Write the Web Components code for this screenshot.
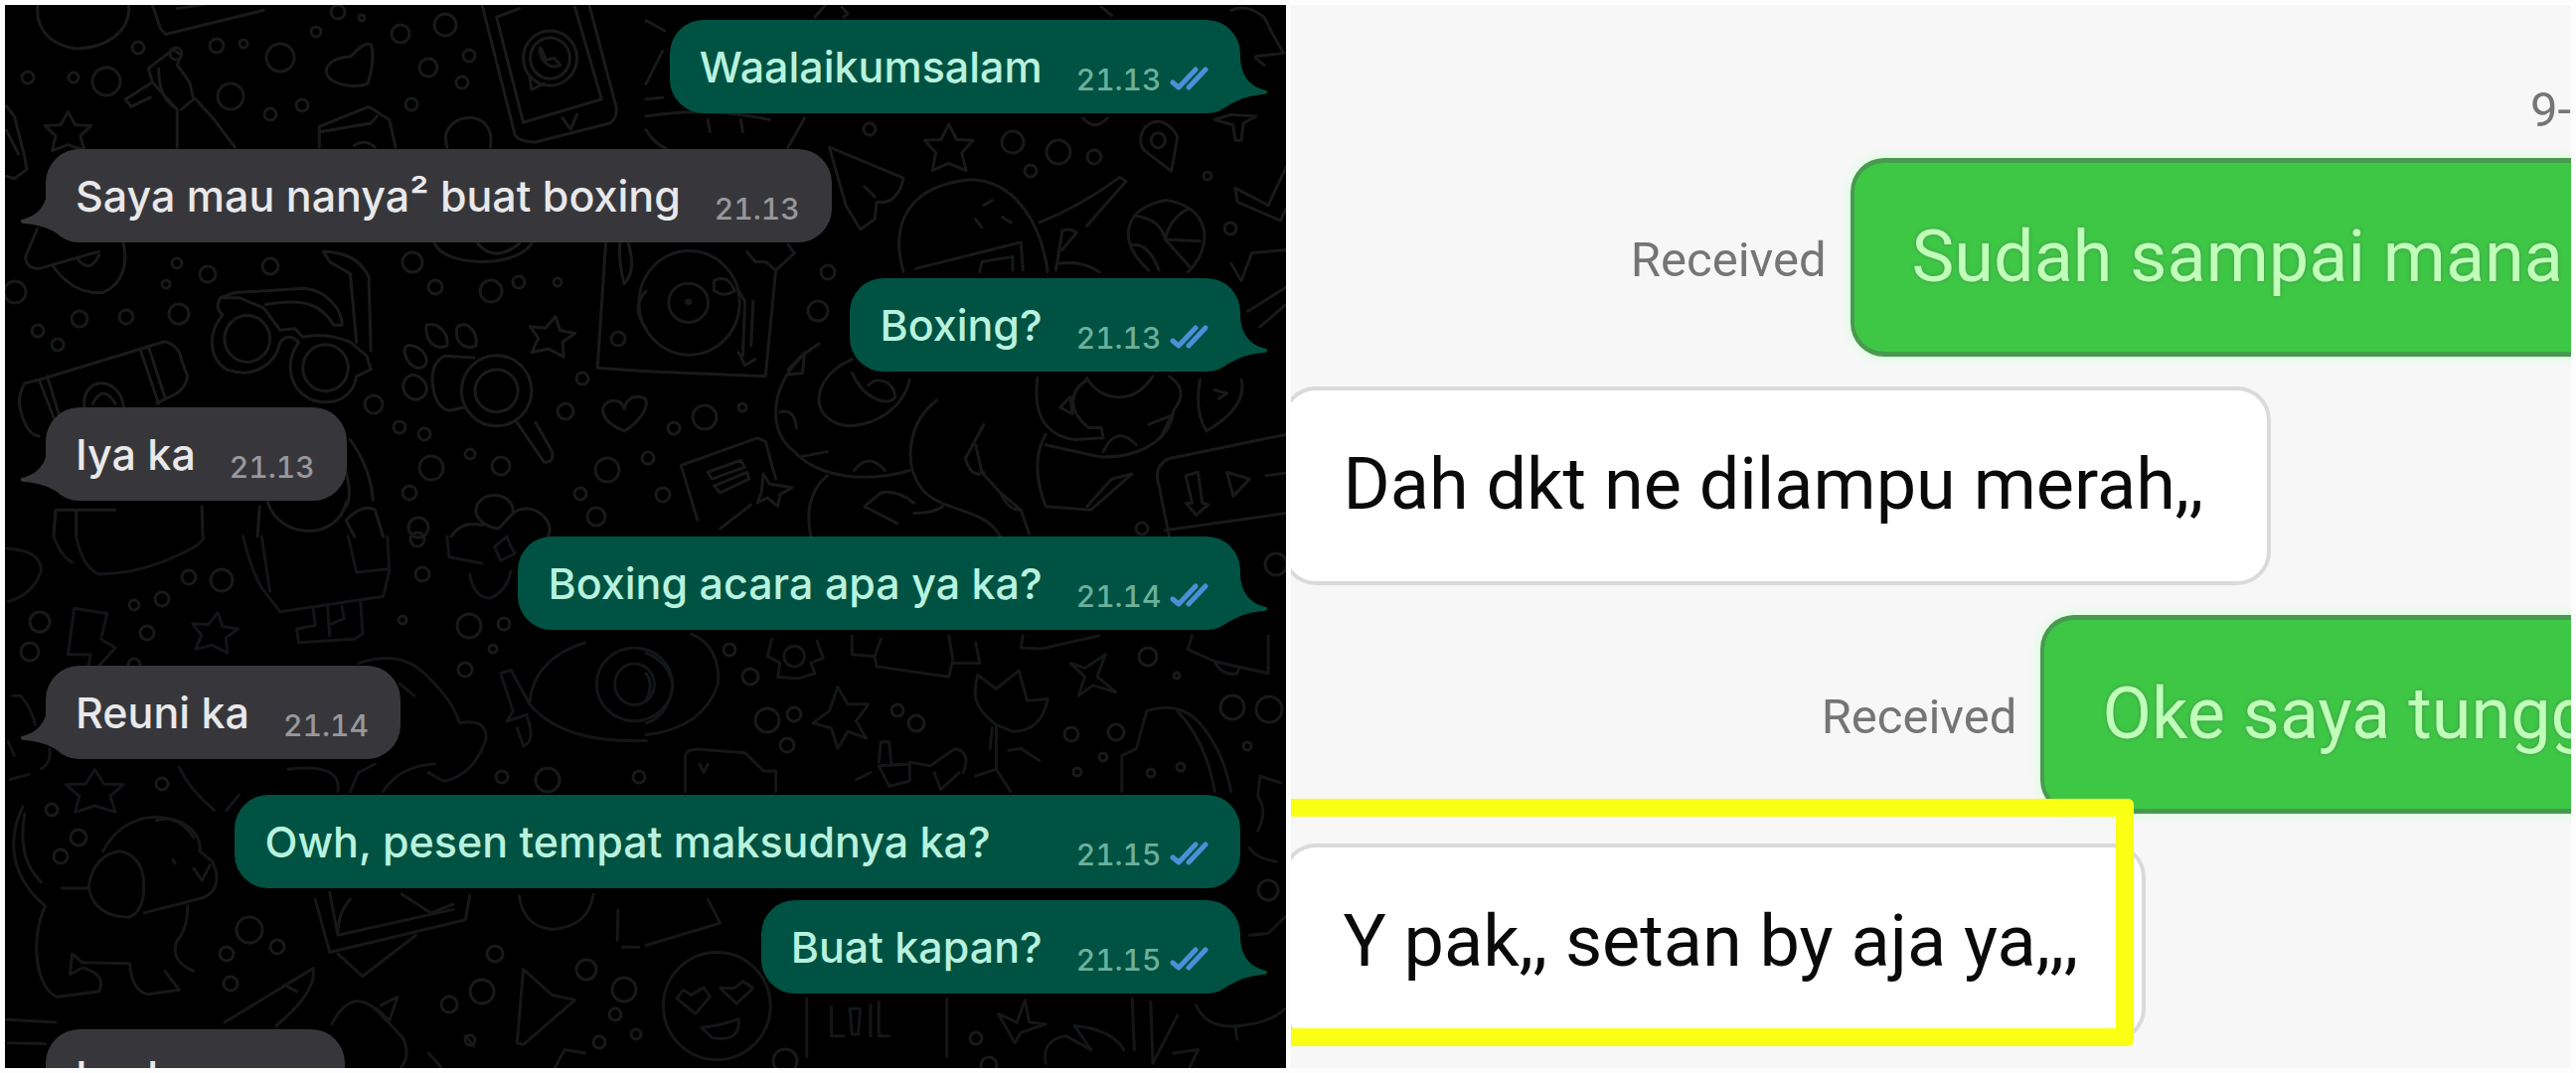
<!DOCTYPE html>
<html lang="id">
<head>
<meta charset="utf-8">
<title>Chat</title>
<style>
  html, body { margin: 0; height: 100%; background: #fdfdfe; }
</style>
</head>
<body>
<chat-collage>
  <dark-chat slot="left">
    <dark-bubble side="out" tail time="21.13">Waalaikumsalam</dark-bubble>
    <dark-bubble side="in" tail time="21.13">Saya mau nanya² buat boxing</dark-bubble>
    <dark-bubble side="out" tail time="21.13">Boxing?</dark-bubble>
    <dark-bubble side="in" tail time="21.13">Iya ka</dark-bubble>
    <dark-bubble side="out" tail time="21.14">Boxing acara apa ya ka?</dark-bubble>
    <dark-bubble side="in" tail time="21.14">Reuni ka</dark-bubble>
    <dark-bubble side="out" loose time="21.15">Owh, pesen tempat maksudnya ka?</dark-bubble>
    <dark-bubble side="out" tail follow time="21.15">Buat kapan?</dark-bubble>
    <dark-bubble side="in" tail time="">Iya ka</dark-bubble>
  </dark-chat>
  <light-chat slot="right" date="9-">
    <light-bubble side="out" status="Received">Sudah sampai mana</light-bubble>
    <light-bubble side="in">Dah dkt ne dilampu merah,,</light-bubble>
    <light-bubble side="out" long status="Received">Oke saya tungg</light-bubble>
    <light-bubble side="in" marked>Y pak,, setan by aja ya,,,</light-bubble>
  </light-chat>
</chat-collage>

<template id="collage-tpl">
  <style>
    :host { display: grid; grid-template-columns: 1fr 1fr; gap: 5px; height: 100vh; padding: 5px; box-sizing: border-box; }
    ::slotted(*) { min-width: 0; min-height: 0; }
  </style>
  <slot name="left"></slot>
  <slot name="right"></slot>
</template>

<template id="dark-chat-tpl">
  <style>
    :host { display: block; position: relative; overflow: hidden; background: #000; font-family: Inter, "Liberation Sans", sans-serif; }
    .list { position: relative; display: flex; flex-direction: column; gap: 36px; padding: 15px 46px 0 41px; }
    doodle-wallpaper { position: absolute; inset: 0; }
  </style>
  <doodle-wallpaper></doodle-wallpaper>
  <div class="list"><slot></slot></div>
</template>

<template id="dark-bubble-tpl">
  <style>
    :host { display: flex; flex: none; }
    :host([side="out"]) { justify-content: flex-end; --fill: #005242; --ink: #b8f2de; --dim: #6cb09b; }
    :host([side="in"]) { --fill: #37373b; --ink: #e8e8ea; --dim: #98989c; }
    :host([follow]) { margin-top: -24px; }
    .bubble { position: relative; display: flex; align-items: flex-end; gap: 34px; height: 94px; padding: 0 32px 0 30px; box-sizing: border-box; border-radius: 34px; background: var(--fill); color: var(--ink); }
    :host([loose]) .bubble { gap: 86px; }
    .text { font-size: 43px; font-weight: 500; line-height: 94px; white-space: nowrap; }
    .meta { display: flex; align-items: flex-end; gap: 8px; padding-bottom: 19px; color: var(--dim); }
    time { font-size: 30px; font-weight: 500; line-height: 30px; font-variant-numeric: tabular-nums; }
    .ticks { display: none; width: 39px; height: 24px; margin-bottom: 4px; }
    :host([side="out"]) .ticks { display: block; }
    .tail { display: none; position: absolute; top: 36px; width: 56px; height: 54px; fill: var(--fill); }
    :host([tail]) .tail { display: block; }
    :host([side="out"]) .tail { right: -28px; }
    :host([side="in"]) .tail { left: -26px; transform: scaleX(-1); }
  </style>
  <div class="bubble">
    <svg class="tail" viewBox="0 0 56 54" aria-hidden="true"><path d="M10 0H28C28 18 36 31 54 35C57 37 54 39 50 39C40 40 32 42 24 46L8 54Z"/></svg>
    <span class="text"><slot></slot></span>
    <span class="meta">
      <time></time>
      <svg class="ticks" viewBox="0 0 39 24" fill="none" stroke="#4a90d8" stroke-width="5" stroke-linecap="round" stroke-linejoin="round" role="img" aria-label="Dibaca"><path d="M3 16L9 21L26 3M19 21L36 3"/></svg>
    </span>
  </div>
</template>

<template id="light-chat-tpl">
  <style>
    :host { display: block; overflow: hidden; background: #f7f7f7; font-family: Roboto, "Liberation Sans", sans-serif; }
    .date { padding-top: 76px; margin-bottom: 18px; text-align: right; color: #757575; font-size: 49px; line-height: 60px; }
    .list { display: flex; flex-direction: column; gap: 30px; }
  </style>
  <div class="date"></div>
  <div class="list"><slot></slot></div>
</template>

<template id="light-bubble-tpl">
  <style>
    :host { display: flex; flex: none; align-items: center; gap: 24px; }
    :host([side="out"]) { justify-content: flex-end; }
    .status { padding-top: 6px; color: #757575; font-size: 49px; line-height: 60px; }
    .bubble { position: relative; height: 200px; box-sizing: border-box; font-size: 72px; line-height: 190px; white-space: nowrap; }
    :host([side="out"]) .bubble { padding: 0 8px 0 58px; border: 5px solid #489a4f; border-width: 5px 0 5px 4px; border-radius: 34px 0 0 34px; background: #3ec745; color: #bfffb8; text-shadow: 0 0 4px #4a8f55; box-shadow: 0 0 8px 3px #dcffe0; }
    :host([long]) .bubble { padding-right: 0; margin-right: -20px; }
    :host([side="in"]) .bubble { margin-left: -9px; padding: 0 64px 0 58px; border: 4px solid #dadadd; border-radius: 34px; background: #fff; color: #0a0a0a; }
    .mark { display: none; position: absolute; inset: -49px 8px -8px 5px; border: 18px solid #faff14; border-left: 0; border-radius: 0 6px 6px 0; }
    :host([marked]) .mark { display: block; }
  </style>
  <span class="status"></span>
  <div class="bubble"><slot></slot><span class="mark"></span></div>
</template>

<template id="wallpaper-tpl">
  <style>
    :host { display: block; }
    svg { display: block; width: 100%; height: 100%; }
    g { fill: none; stroke-width: 3; stroke-linecap: round; stroke-linejoin: round; }
    g * { vector-effect: non-scaling-stroke; }
  </style>
  <svg viewBox="5 5 1289 1070" preserveAspectRatio="xMinYMin slice" aria-hidden="true">
    <defs>
      <path id="star" vector-effect="non-scaling-stroke" d="M0-58L18-20L56-18L30 12L40 55L0 38L-38 55L-30 12L-56-18L-18-20Z"/>
      <path id="heart" vector-effect="non-scaling-stroke" d="M0 50C-60 20-60-20-40-35C-20-45-5-35 0-15C5-45 25-60 50-45C65-20 30 30 0 50Z"/>
    </defs>
    <g id="q1" transform="scale(.4146 .3444)" stroke="#191b1a">
      <path d="M92 10C85 70 110 130 185 142C260 140 320 90 312 10M370 15L390 85L402 100L640 30M430 25L500 12"/>
      <path d="M430 430L430 320L370 240L305 290L318 312L365 285M370 240L360 200L420 145L440 160L430 190L460 240L470 290L440 320M385 200C385 260 400 300 430 318M475 290L520 350L570 430"/>
      <use href="#star" transform="translate(165 385)"/>
      <path d="M15 310L35 340L60 460L65 495L35 522L15 515M15 380L45 450"/>
      <path d="M900 130C880 120 860 160 850 165C800 170 780 200 800 230C830 255 870 255 892 245C900 220 910 160 900 130Z"/>
      <path d="M775 430L775 370L895 312L945 350L960 430M780 385L900 360L915 340M860 425Q885 405 910 430M1085 430C1070 370 1110 340 1150 345C1190 355 1195 400 1190 430"/>
      <path d="M1170 15L1250 395Q1260 415 1300 415L1480 360Q1500 345 1495 310L1430 15M1205 50L1270 358L1460 290L1395 20M1205 50L1260 25M1365 345L1385 378L1400 335"/>
      <ellipse cx="1335" cy="170" rx="65" ry="80"/><ellipse cx="1335" cy="170" rx="48" ry="60"/><path d="M1310 140C1310 180 1335 205 1360 190L1345 170L1325 175L1315 145Z M1285 220L1290 262L1320 245"/>
      <path d="M90 670L62 750Q62 785 95 785L240 735M130 780C160 830 200 860 250 855C300 830 310 770 300 712M190 760Q220 800 240 745"/>
      <path d="M785 735L800 765L850 800L865 1000M790 735Q870 740 895 810L900 1025"/>
      <path d="M535 870Q520 900 540 920C500 980 510 1050 550 1080C620 1110 670 1060 680 1000Q700 970 725 1000C690 1060 700 1140 760 1170C820 1190 860 1150 865 1100L900 1080L890 1040L850 1000Q790 970 735 985L715 960L680 965L640 900L580 870L535 870L570 855L740 843C790 850 830 900 830 950L810 950C780 890 740 870 645 890"/>
      <ellipse cx="600" cy="990" rx="55" ry="68"/><ellipse cx="790" cy="1075" rx="55" ry="68"/>
      <path d="M135 1235L95 1110L60 1120Q40 1160 50 1200Q65 1270 95 1275M95 1110L400 998Q435 1010 440 1050L455 1100Q450 1140 420 1155L380 1178M340 1020L385 1180M115 1100L145 1220M360 1012L400 1160M205 1190C195 1100 290 1095 300 1188M225 1180Q250 1120 280 1180"/>
      <path d="M1150 1045L1080 1040Q1045 1060 1050 1120Q1055 1190 1090 1200L1130 1190"/>
      <ellipse cx="1205" cy="1142" rx="85" ry="103"/><ellipse cx="1205" cy="1142" rx="52" ry="62"/>
      <path d="M1255 1235L1320 1350Q1345 1355 1340 1320L1300 1235M1000 1010C970 1000 980 1060 1010 1075C1050 1080 1040 1020 1000 1010ZM1000 1095C965 1110 975 1165 1010 1168C1050 1160 1040 1100 1000 1095ZM1035 950C1030 1000 1060 1025 1085 1010C1090 970 1060 940 1035 950ZM1110 955C1100 1000 1130 1025 1155 1010C1160 970 1135 935 1110 955Z"/>
      <use href="#star" transform="translate(1338 982) rotate(10)"/>
      <use href="#heart" transform="translate(1515 1210)"/>
      <path d="M1055 712C1080 780 1250 785 1290 712M1160 712Q1200 770 1260 712M1470 712L1450 1075L1568 1085M1505 712Q1500 760 1515 830Q1545 790 1525 712M1568 850Q1530 900 1568 960"/>
      <path d="M130 1568L135 1490L280 1490M185 1490L185 1568M490 1480L492 1568M650 1468C680 1580 820 1580 840 1468M850 1285Q900 1370 905 1460M840 1380Q855 1450 840 1480M840 1520Q880 1470 910 1490L930 1568M840 1520L860 1568M630 1480L625 1568"/>
      <path d="M1155 1500C1150 1430 1250 1430 1245 1500C1290 1460 1350 1520 1330 1568M1155 1500Q1170 1540 1210 1545L1245 1500M1095 1568Q1120 1520 1170 1535"/>
    </g>
    <g id="q2" transform="translate(650 0) scale(.4146 .3444)" stroke="#18191a">
      <path d="M0 60L45 90M40 150L0 245M475 20L490 40L480 50M410 50L435 15M1105 20L1130 45M1420 30Q1460 10 1500 50Q1520 100 1545 150M1480 170L1500 190M1480 165L1550 155"/>
      <path d="M0 290L40 285M0 340Q150 310 300 350M0 380Q20 420 50 435M150 350L155 385M230 350L235 385M385 345L345 430"/>
      <use href="#star" transform="translate(735 432) scale(1.05 1.2)"/>
      <path d="M445 430L625 520Q610 600 560 590L555 640L520 670L485 600ZM530 545L555 575M1250 355C1200 350 1190 420 1210 440L1275 500L1290 400Q1280 370 1250 355Z"/>
      <ellipse cx="1243" cy="410" rx="17" ry="22"/><path d="M1380 350L1420 335L1480 340L1450 360L1445 410L1430 410L1425 365ZM1060 345Q1090 385 1120 345"/>
      <path d="M625 795C590 650 640 540 790 525C900 530 960 660 975 795M655 785L910 708L915 790M810 795L815 765L890 750L890 790M800 640L815 665M865 635L885 650M820 600L840 585"/>
      <path d="M955 650C1020 620 1080 580 1150 518L1165 530L1070 660M995 790L1010 675Q1030 665 1045 680L1010 730M1000 770Q1060 760 1100 795"/>
      <path d="M1220 790C1140 700 1160 610 1260 585C1370 600 1380 720 1315 795M1185 630Q1250 640 1260 700L1345 705M1260 700Q1270 640 1315 610M1260 700L1320 780M1180 715Q1220 710 1245 790"/>
      <path d="M1553 490L1510 600L1430 550L1435 590L1540 645L1553 610M1420 770L1445 820L1470 740L1553 730M1460 910L1553 840M1490 955L1553 890"/>
      <ellipse cx="105" cy="885" rx="122" ry="152"/><ellipse cx="103" cy="885" rx="48" ry="57"/><circle cx="103" cy="882" r="5"/>
      <path d="M245 735L265 765L290 765L315 790L290 1100L0 1085M315 790L360 740L345 715M225 850L240 880L235 1040M260 880L255 1010M225 1030L240 1068L265 1050M165 820Q200 800 215 850Q190 870 165 850Z"/>
      <path d="M420 1005C310 1080 280 1250 360 1320C420 1400 540 1410 640 1375M500 1050C400 1100 390 1230 490 1245C580 1240 630 1170 640 1110M500 1090C530 1170 590 1190 605 1160C600 1110 560 1100 540 1125M345 1080L385 1030L380 1090L345 1095M325 1205Q360 1190 365 1250M375 1335L440 1320M505 1375Q540 1320 580 1375M440 1390Q380 1450 400 1568"/>
      <path d="M705 1170C640 1230 620 1350 670 1430C720 1500 820 1480 860 1568M820 1240L775 1340Q790 1400 820 1380M800 1300L815 1380L860 1440L910 1490L930 1560M530 1480L570 1440Q610 1430 650 1470M530 1480L610 1530M650 1500Q700 1500 720 1480M860 1440Q880 1490 905 1490"/>
      <path d="M950 1105C940 1200 960 1270 1040 1285L1110 1280L1105 1250L1075 1250C1030 1210 1020 1150 1070 1110M1070 1105C1100 1170 1180 1190 1230 1100M1270 1100Q1320 1140 1280 1200C1270 1300 1180 1340 1100 1335L970 1300M1110 1320Q1140 1240 1190 1300M1220 1240L1275 1215L1250 1275M1005 1190L1030 1160L1035 1210ZM970 1270Q930 1350 970 1480L1080 1490L1180 1385L1130 1400L1070 1480"/>
      <path d="M1345 1110Q1330 1200 1360 1260Q1460 1190 1445 1110M1380 1140L1410 1150L1390 1165M1553 1270L1270 1340Q1230 1360 1245 1420L1270 1568M1310 1390L1340 1380L1350 1470L1365 1475L1335 1505L1310 1470L1325 1470ZM1410 1380L1465 1400L1425 1450ZM1505 1390L1553 1382M1260 1550L1553 1500"/>
      <path d="M125 1520L85 1360L270 1280L290 1290L315 1400M150 1380L230 1345L240 1365L160 1400ZM165 1420L245 1380L250 1400L180 1440ZM285 1385L300 1415L355 1425L325 1445L320 1480L295 1455L270 1470L280 1440ZM180 1545L255 1475"/>
    </g>
    <g id="q3" transform="translate(0 540) scale(.4146 .3444)" stroke="#141519">
      <path d="M15 35Q100 40 100 100Q80 170 20 190M130 0Q150 60 175 75M185 0Q200 90 240 110Q350 110 465 35Q490 20 495 0M590 0Q610 100 635 150L680 220L930 175L945 100L940 0M635 0L655 160M845 0L865 105L940 95M1085 0L1090 60L1170 78M1200 30L1230 0L1240 30L1250 50L1215 70ZM1140 110Q1150 180 1190 180Q1230 160 1240 100"/>
      <path d="M760 210L765 260L720 270L725 310L860 300L880 285L875 190M795 205L800 290M830 205L835 240L805 255"/>
      <path d="M180 210L260 225L245 300L280 325L240 378M180 210L165 345L220 345L215 378"/><use href="#star" transform="translate(520 280) rotate(8)"/>
      <path d="M870 370Q970 330 1030 400Q1100 480 1115 545Q1180 530 1180 590Q1150 700 1075 715L1040 690M970 430L1005 465M930 745Q970 670 1055 665M850 745L870 690L910 665M700 680Q830 660 820 745M435 675Q460 740 520 800M550 800L580 755"/>
      <path d="M1420 310C1340 340 1290 400 1285 490C1350 580 1450 600 1568 597M1285 490L1240 390L1215 400L1245 510L1230 540L1280 520M1280 530Q1300 600 1270 612L1255 560"/><ellipse cx="1540" cy="432" rx="92" ry="107"/><ellipse cx="1540" cy="432" rx="48" ry="60"/>
      <path d="M30 465L50 465Q80 510 85 550M20 600L35 640M120 620Q125 665 100 678M25 710L70 695"/><use href="#star" transform="translate(230 745) scale(1.25 1.1)"/>
    </g>
    <g id="q3b" transform="translate(0 540) scale(.4146 .3444)" stroke="#151814">
      <path d="M55 790C20 880 20 990 110 1080C70 1180 90 1330 140 1345L240 1330Q260 1280 200 1260L170 1280L175 1220L200 1245L315 1248Q320 1330 360 1338L435 1325L400 1270M60 810Q40 940 100 1010M150 1028L215 1028M215 1020C220 1080 260 1115 315 1112Q355 1090 348 1000Q340 930 290 920Q230 930 215 1020M250 920C290 830 360 800 440 835Q490 870 485 920L515 950C540 1010 520 1050 480 1060L350 1100M455 1080Q455 1150 430 1180Q410 1240 470 1270M380 830Q430 810 470 880M420 945L425 955M470 970L490 1005L510 960"/>
      <path d="M765 1060L800 1215L1130 1120L1140 1050M800 1040L820 1165L1100 1090M850 1060Q820 1100 820 1160M975 1045L1045 1100L1100 1075M820 1220L880 1285L1010 1165M545 1420L760 1262Q770 1330 670 1430M690 1310L720 1330M1260 1050Q1270 1140 1340 1148Q1430 1140 1440 1045M1500 1090L1498 1180M1510 1200L1550 1200"/>
      <path d="M805 1425Q850 1320 910 1380Q960 1440 980 1470Q1000 1530 960 1568M915 1380L945 1415L965 1345L925 1370M1270 1265L1255 1480L1270 1485L1395 1355L1340 1340ZM15 1412L135 1420M20 1480L110 1482M1130 1460L1150 1490M1040 1510L1070 1550M1340 1568L1370 1500L1420 1510"/>
    </g>
    <g id="q4" transform="translate(650 540) scale(.4146 .3444)" stroke="#141618">
      <path d="M110 285Q180 320 175 430Q140 560 0 580M0 340Q60 370 65 440Q50 530 0 545M0 400Q20 430 0 480"/>
      <path d="M305 300L295 350L325 370L320 410L370 415L410 400L400 370L430 355L415 305"/><ellipse cx="360" cy="350" rx="25" ry="30"/>
      <path d="M500 290L500 345L555 350L560 380L735 410L745 360L735 290M745 370L810 370L800 310M555 350L570 300M915 290L910 325L960 328L1100 290"/>
      <path d="M465 440L490 490L540 490L510 540L535 590L490 570L465 620L450 560L405 545L445 510Z"/>
      <path d="M850 550C780 490 800 440 805 405L850 445L905 392L925 480L975 475Q960 570 890 570L850 550L850 680L885 745M850 680L800 700M880 625L910 620L955 655M840 560L835 620"/>
      <path d="M1030 370L1065 385L1115 345L1095 410L1140 455L1085 435L1050 465L1065 410Z"/>
      <path d="M95 745L95 640Q100 620 130 622L240 632L285 685L315 685L315 745M130 665L140 690L150 665M565 670L590 730L640 715L640 665ZM565 660L570 600L590 600L595 660M640 660L690 670L750 620Q790 630 770 690M510 710L545 690M700 690L715 740L760 690"/>
      <path d="M1155 745L1155 640L1190 620L1215 510Q1290 480 1340 540Q1400 620 1420 745M1290 510Q1360 600 1380 745M1325 290L1315 330L1380 365L1510 400L1510 290M1380 365Q1400 410 1435 400L1440 385M1485 860Q1510 800 1485 760L1490 700L1540 720M1465 910Q1480 940 1530 950"/>
      <path d="M150 1060L180 1130L0 1195M1465 1165L1510 1160L1553 1110M1335 1370Q1360 1440 1440 1430Q1520 1420 1550 1380M1430 1430L1435 1470"/>
      <ellipse cx="172" cy="1372" rx="130" ry="157"/><path d="M75 1350L120 1395L155 1345L140 1318L110 1340L90 1325ZM180 1320L220 1365L260 1320L235 1300L215 1320ZM135 1435Q180 1430 225 1410Q230 1480 160 1465Z"/>
      <path d="M390 1350L390 1520M730 1350L730 1520M450 1375L450 1460L480 1460M495 1380L520 1380L515 1455L500 1455ZM545 1370L545 1460M565 1360L565 1460L590 1460M855 1395L900 1420L920 1355L930 1420L970 1425L910 1450L895 1480ZM970 1540Q960 1470 1020 1460L1080 1500L1040 1430Q1130 1440 1160 1500M1180 1350L1185 1500M1225 1360L1230 1540L1290 1400M1280 1510L1340 1500L1320 1550"/>
    </g>
    <g id="dots" stroke="#181a1a"></g>
  </svg>
</template>

<script>
  const stamp = (host, id) => {
    const root = host.attachShadow({ mode: 'open' });
    root.append(document.getElementById(id).content.cloneNode(true));
    return root;
  };

  // Small rings scattered between the drawings: x, y, radius.
  const DOTS = [
    [139,48,6],[218,46,7],[245,44,4],[282,58,14],[318,32,5],[340,12,7],[364,18,3],[403,34,9],[448,25,11],[431,68,9],[472,56,6],[465,83,6],[28,78,6],[74,78,5],[107,82,14],[232,97,13],[272,115,6],[304,106,6],[414,105,6],[177,54,6],
    [178,265,5],[209,276,8],[272,268,8],[415,264,10],[438,289,7],[494,293,11],[522,284,6],[561,284,4],[80,321,8],[127,319,7],[180,316,10],[38,333,6],[58,347,6],[15,294,11],[376,407,9],[402,430,6],[427,437,6],[586,381,6],[569,414,8],[434,471,12],[473,457,5],[504,469,9],[611,473,12],[412,496,7],[584,497,6],[600,520,9],[421,531,10],[622,341,7],[167,286,4],
    [875,130,6],[1019,143,11],[1065,153,12],[1101,158,7],[1037,172,6],[1215,177,4],[1238,230,6],[833,274,7],[823,313,10],[709,420,12],[747,410,4],[678,431,6],[652,461,6],[667,498,7],[1149,532,6],
    [190,581,7],[223,584,11],[163,603,7],[135,609,5],[40,626,10],[148,637,7],[30,656,9],[425,578,7],[420,543,7],[405,624,4],[472,630,12],[507,628,6],[496,653,4],[468,674,7],[135,669,6],[163,789,6],[52,815,6],[79,843,8],[61,862,7],[505,782,6],[551,785,12],[643,782,6],[251,936,13],[279,953,7],[228,960,7],[232,990,7],[498,960,8],[590,976,10],[485,998,12],[452,1011,8],[473,1047,5],[628,996,12],[619,1021,6],[603,1049,6],[640,1041,5],
    [734,654,6],[755,681,8],[772,725,12],[799,719,7],[792,750,7],[903,715,6],[922,728,8],[1155,661,9],[1184,680,3],[1240,712,12],[1277,714,13],[1078,739,7],[1123,737,8],[1110,762,4],[1084,777,4],[1158,778,4],[1188,772,4],[1255,751,4],[1284,568,11],[1276,896,10],[790,1068,12],[982,1045,6],[995,1072,8]
  ];

  customElements.define('doodle-wallpaper', class extends HTMLElement {
    constructor() {
      super();
      const group = stamp(this, 'wallpaper-tpl').getElementById('dots');
      for (const [x, y, r] of DOTS) {
        const ring = document.createElementNS('http://www.w3.org/2000/svg', 'ellipse');
        ring.setAttribute('cx', x);
        ring.setAttribute('cy', y);
        ring.setAttribute('rx', r);
        ring.setAttribute('ry', r);
        group.append(ring);
      }
    }
  });
  customElements.define('chat-collage', class extends HTMLElement {
    constructor() { super(); stamp(this, 'collage-tpl'); }
  });
  customElements.define('dark-chat', class extends HTMLElement {
    constructor() { super(); stamp(this, 'dark-chat-tpl'); }
  });
  customElements.define('dark-bubble', class extends HTMLElement {
    constructor() {
      super();
      const root = stamp(this, 'dark-bubble-tpl');
      const time = this.getAttribute('time');
      root.querySelector('time').textContent = time;
      if (!time) root.querySelector('.meta').style.minWidth = '84px';
    }
  });
  customElements.define('light-chat', class extends HTMLElement {
    constructor() {
      super();
      stamp(this, 'light-chat-tpl').querySelector('.date').textContent = this.getAttribute('date');
    }
  });
  customElements.define('light-bubble', class extends HTMLElement {
    constructor() {
      super();
      const status = stamp(this, 'light-bubble-tpl').querySelector('.status');
      if (this.hasAttribute('status')) status.textContent = this.getAttribute('status');
      else status.remove();
    }
  });
</script>
</body>
</html>
